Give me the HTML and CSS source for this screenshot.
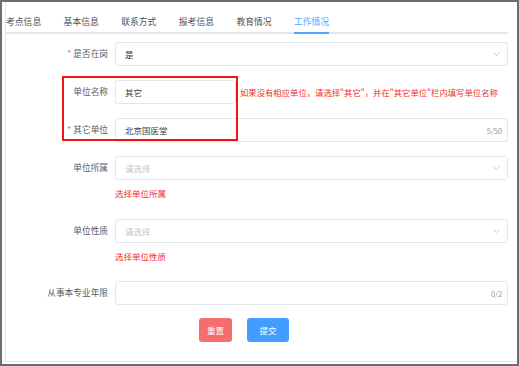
FILE: index.html
```
<!DOCTYPE html>
<html lang="zh-CN">
<head>
  <meta charset="UTF-8">
  <title>工作情况</title>
  <link rel="stylesheet" href="styles.css">
</head>
<body>
  <div class="frame">
    <div class="panel">
      <div class="tabs">
        <div class="tab">考点信息</div>
        <div class="tab">基本信息</div>
        <div class="tab">联系方式</div>
        <div class="tab">报考信息</div>
        <div class="tab">教育情况</div>
        <div class="tab active">工作情况</div>
      </div>
      <form class="form">
        <div class="row">
          <label class="label"><span class="req">*</span>是否在岗</label>
          <div class="control">
            <div class="field">
              <span class="value">是</span>
              <svg class="arrow" width="7" height="4" viewBox="0 0 7 4"><polyline points="0.5,0.5 3.5,3.5 6.5,0.5" fill="none" stroke="#c0c4cc" stroke-width="0.9"/></svg>
            </div>
          </div>
        </div>
        <div class="row">
          <label class="label">单位名称</label>
          <div class="control inline">
            <div class="field short"><span class="value">其它</span></div>
            <span class="hint">如果没有相应单位，请选择"其它"，并在"其它单位"栏内填写单位名称</span>
          </div>
        </div>
        <div class="row">
          <label class="label"><span class="req">*</span>其它单位</label>
          <div class="control">
            <div class="field">
              <span class="value">北京国医堂</span>
              <span class="count">5/50</span>
            </div>
          </div>
        </div>
        <div class="row">
          <label class="label">单位所属</label>
          <div class="control">
            <div class="field">
              <span class="placeholder">请选择</span>
              <svg class="arrow" width="7" height="4" viewBox="0 0 7 4"><polyline points="0.5,0.5 3.5,3.5 6.5,0.5" fill="none" stroke="#c0c4cc" stroke-width="0.9"/></svg>
            </div>
            <div class="error">选择单位所属</div>
          </div>
        </div>
        <div class="row">
          <label class="label">单位性质</label>
          <div class="control">
            <div class="field">
              <span class="placeholder">请选择</span>
              <svg class="arrow" width="7" height="4" viewBox="0 0 7 4"><polyline points="0.5,0.5 3.5,3.5 6.5,0.5" fill="none" stroke="#c0c4cc" stroke-width="0.9"/></svg>
            </div>
            <div class="error">选择单位性质</div>
          </div>
        </div>
        <div class="row">
          <label class="label">从事本专业年限</label>
          <div class="control">
            <div class="field">
              <span class="value"></span>
              <span class="count">0/2</span>
            </div>
          </div>
        </div>
        <div class="row buttons">
          <button type="button" class="btn reset">重置</button>
          <button type="button" class="btn submit">提交</button>
        </div>
        <div class="mark"></div>
      </form>
    </div>
  </div>
</body>
</html>
```
FILE: styles.css
```
html, body {
  margin: 0;
  padding: 0;
  background: #fff;
}
body {
  font-family: "Noto Sans CJK SC", "Noto Sans", sans-serif;
  width: 519px;
  height: 366px;
}
.frame {
  box-sizing: border-box;
  width: 519px;
  height: 366px;
  border: 2px solid #6e6e6e;
  display: flex;
  flex-direction: column;
}
.panel {
  flex: 1;
  margin: 0 0 2px 3px;
  padding-right: 9px;
  border-left: 1px solid #e4e7ed;
  border-bottom: 1px solid #e4e7ed;
}
.tabs {
  display: flex;
  gap: 22.4px;
  border-bottom: 2px solid #e4e7ed;
  height: 30px;
}
.tab {
  font-size: 8.8px;
  color: #505256;
  padding-top: 9px;
  line-height: 21px;
  box-sizing: border-box;
  border-bottom: 2px solid transparent;
  margin-bottom: -2px;
  height: 32px;
}
.tab.active {
  color: #52a6ff;
  border-bottom-color: #52a6ff;
}

/* form */
.form {
  position: relative;
  margin: 8px 0 0;
}
.row {
  display: flex;
  margin-bottom: 14px;
}
.label {
  box-sizing: border-box;
  width: 109px;
  padding-right: 7px;
  text-align: right;
  font-size: 8.7px;
  line-height: 24px;
  height: 24px;
  color: #5a5c61;
  flex-shrink: 0;
}
.req {
  color: #f56c6c;
  margin-right: 2px;
}
.control {
  flex: 1;
  display: flex;
  flex-direction: column;
}
.control.inline {
  flex-direction: row;
  align-items: center;
}
.field {
  box-sizing: border-box;
  height: 24px;
  border: 1px solid #e4e7ed;
  border-radius: 3px;
  display: flex;
  align-items: center;
  padding: 0 7px 0 9px;
  font-size: 8.5px;
}
.field.short {
  width: 121px;
}
.value {
  flex: 1;
  color: #3c3d40;
}
.placeholder {
  flex: 1;
  color: #c0c4cc;
}
.arrow {
  display: block;
}
.count {
  font-size: 7.4px;
  color: #909399;
  margin-right: -2px;
}
.hint {
  margin-left: 4px;
  font-size: 8.35px;
  color: #f22c2c;
  white-space: nowrap;
}
.error {
  font-size: 8.5px;
  color: #f22c2c;
  padding-top: 6px;
  line-height: 14px;
  height: 24.5px;
  box-sizing: border-box;
}
.buttons {
  padding-left: 193px;
  gap: 15px;
  margin-top: -1px;
}
.btn {
  height: 24px;
  border: none;
  border-radius: 3px;
  color: #fff;
  font-family: inherit;
  font-size: 8.5px;
  padding: 0;
}
.btn.reset {
  width: 33px;
  background: #f56e6e;
}
.btn.submit {
  width: 42px;
  background: #409eff;
}

/* annotation box drawn over the screenshot */
.mark {
  position: absolute;
  left: 56px;
  top: 34px;
  width: 176px;
  height: 65px;
  box-sizing: border-box;
  border: 2px solid #f01414;
  pointer-events: none;
}
```
